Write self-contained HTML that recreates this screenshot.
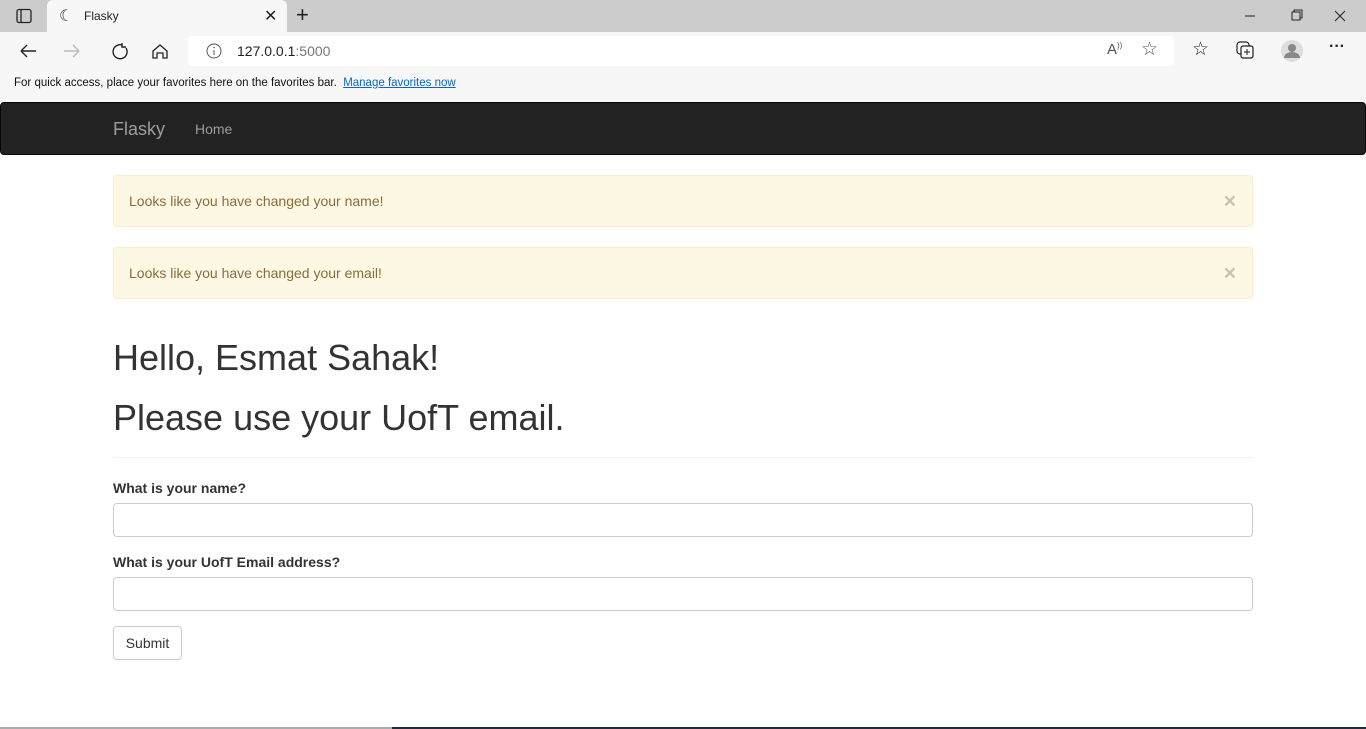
<!DOCTYPE html>
<html><head><meta charset="utf-8"><style>
*{box-sizing:border-box}
body{margin:0;width:1366px;height:729px;overflow:hidden;font-family:"Liberation Sans",sans-serif;background:#fff;position:relative}
.tabbar{position:absolute;top:0;left:0;width:1366px;height:32px;background:#cccccc}
.tab{position:absolute;left:47px;top:0;width:240px;height:32px;background:#f7f7f7;border-radius:6px 6px 0 0}
.toolbar{position:absolute;top:32px;left:0;width:1366px;height:70px;background:#f7f7f7}
.addr{position:absolute;left:188px;top:4px;width:986px;height:30px;background:#fff;border-radius:4px}
.nav{position:absolute;top:102px;left:0;width:1366px;height:53px;background:#222;border:1px solid #080808;border-radius:4px}
.alert{position:absolute;left:113px;width:1140px;height:52px;background:#fcf8e3;border:1px solid #faebcc;border-radius:4px;color:#8a6d3b;font-size:14px;padding:17px 15px}
.alert .x{position:absolute;right:16px;top:15px;font-size:21px;font-weight:bold;color:#c9c2b0;line-height:1}
h1{position:absolute;left:113px;margin:0;font-weight:400;font-size:36px;color:#333}
label{position:absolute;left:113px;font-weight:bold;font-size:14px;color:#333}
.inp{position:absolute;left:113px;width:1140px;height:34px;border:1px solid #ccc;border-radius:4px}
</style></head><body>
<div class="tabbar">
<svg style="position:absolute;left:16px;top:8px" width="16" height="16"><rect x="1" y="1.5" width="14" height="13" rx="2" fill="none" stroke="#222" stroke-width="1.3"/><line x1="5" y1="2" x2="5" y2="14" stroke="#222" stroke-width="1.3"/></svg>
<div class="tab">
<span style="position:absolute;left:12px;top:6px;font-size:16px;color:#333">☾</span>
<span style="position:absolute;left:37px;top:9px;font-size:12px;color:#222">Flasky</span>
<span style="position:absolute;left:217px;top:6px;font-size:16px;color:#222">✕</span>
</div>
<span style="position:absolute;left:296px;top:2px;font-size:22px;color:#222">+</span>
<svg style="position:absolute;left:1240px;top:8px" width="110" height="16"><line x1="5" y1="8" x2="15" y2="8" stroke="#222"/><rect x="52" y="4" width="8" height="8" fill="none" stroke="#222"/><path d="M54 4V2h8v8h-2" fill="none" stroke="#222"/><path d="M95 3l10 10M105 3l-10 10" stroke="#222"/></svg>
</div>
<div class="toolbar">
<svg style="position:absolute;left:18px;top:9px" width="160" height="20"><path d="M3 10h15M3 10l6-6M3 10l6 6" fill="none" stroke="#222" stroke-width="1.4"/><path d="M46 10h15M61 10l-6-6M61 10l-6 6" fill="none" stroke="#bbb" stroke-width="1.4"/><path d="M104 4a7 7 0 1 0 4 3M104 2v4h4" fill="none" stroke="#222" stroke-width="1.4"/><path d="M135 10l7-6 7 6v7h-4v-5h-6v5h-4z" fill="none" stroke="#222" stroke-width="1.3"/></svg>
<div class="addr"><svg style="position:absolute;left:18px;top:7px" width="16" height="16"><circle cx="8" cy="8" r="7" fill="none" stroke="#555"/><line x1="8" y1="7" x2="8" y2="12" stroke="#555"/><circle cx="8" cy="4.5" r=".8" fill="#555"/></svg>
<span style="position:absolute;left:49px;top:7px;font-size:14px;color:#222">127.0.0.1<span style="color:#777">:5000</span></span>
<span style="position:absolute;left:919px;top:5px;font-size:15px;color:#555">A<sup style="font-size:8px">))</sup></span>
<span style="position:absolute;left:953px;top:2px;font-size:19px;color:#555">☆</span></div>
<span style="position:absolute;left:1192px;top:6px;font-size:19px;color:#222">☆</span>
<svg style="position:absolute;left:1236px;top:9px" width="20" height="20"><rect x="1" y="1" width="12" height="12" rx="3" fill="none" stroke="#222" stroke-width="1.2"/><rect x="5" y="5" width="12" height="12" rx="2" fill="#f7f7f7" stroke="#222" stroke-width="1.2"/><path d="M11 8v6M8 11h6" stroke="#222"/></svg>
<svg style="position:absolute;left:1280px;top:7px" width="24" height="24"><circle cx="12" cy="12" r="11" fill="#ddd"/><circle cx="12" cy="9" r="4" fill="#888"/><path d="M4 19a8 6 0 0 1 16 0z" fill="#888"/></svg>
<span style="position:absolute;left:1329px;top:6px;font-size:16px;color:#222;font-weight:bold">···</span>
<div style="position:absolute;left:14px;top:45px;font-size:11.5px;color:#111">For quick access, place your favorites here on the favorites bar.&nbsp; <span style="color:#0b66c3;text-decoration:underline">Manage favorites now</span></div>
</div>
<div class="nav">
<span style="position:absolute;left:112px;top:16px;font-size:18px;color:#9d9d9d">Flasky</span>
<span style="position:absolute;left:194px;top:18px;font-size:14px;color:#9d9d9d">Home</span>
</div>
<div class="alert" style="top:175px">Looks like you have changed your name!<span class="x">×</span></div>
<div class="alert" style="top:247px">Looks like you have changed your email!<span class="x">×</span></div>
<h1 style="top:337px">Hello, Esmat Sahak!</h1>
<h1 style="top:397px">Please use your UofT email.</h1>
<div style="position:absolute;left:113px;top:457px;width:1140px;border-top:1px solid #eee"></div>
<label style="top:480px">What is your name?</label>
<div class="inp" style="top:503px"></div>
<label style="top:554px">What is your UofT Email address?</label>
<div class="inp" style="top:577px"></div>
<div style="position:absolute;left:113px;top:626px;width:69px;height:34px;border:1px solid #ccc;border-radius:4px;font-size:14px;color:#333;text-align:center;line-height:32px">Submit</div>
<div style="position:absolute;left:0;top:727px;width:392px;height:2px;background:#aaa"></div>
<div style="position:absolute;left:392px;top:727px;width:974px;height:2px;background:#1f2a44"></div>
</body></html>
